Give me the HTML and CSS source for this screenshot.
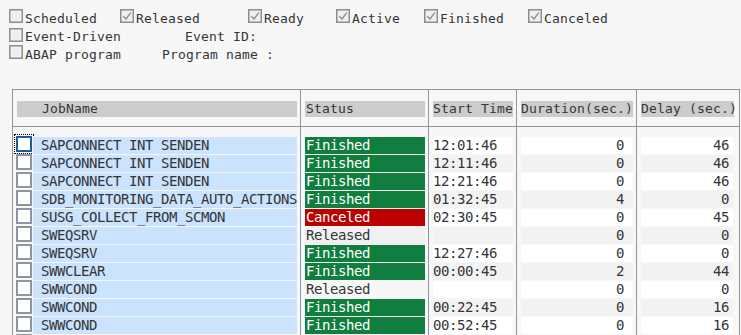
FILE: index.html
```html
<!DOCTYPE html>
<html>
<head>
<meta charset="utf-8">
<link rel="stylesheet" href="styles.css">
</head>
<body>
<div class="filters">
  <div class="frow r1">
    <label class="cb"><svg class="box" viewBox="0 0 14 14"><rect x="0.75" y="0.75" width="12.5" height="12.5"/></svg>Scheduled</label>
    <label class="cb"><svg class="box" viewBox="0 0 14 14"><rect x="0.75" y="0.75" width="12.5" height="12.5"/><path d="M3.3 7.2 L6 10 L10.8 3.6"/></svg>Released</label>
    <label class="cb"><svg class="box" viewBox="0 0 14 14"><rect x="0.75" y="0.75" width="12.5" height="12.5"/><path d="M3.3 7.2 L6 10 L10.8 3.6"/></svg>Ready</label>
    <label class="cb"><svg class="box" viewBox="0 0 14 14"><rect x="0.75" y="0.75" width="12.5" height="12.5"/><path d="M3.3 7.2 L6 10 L10.8 3.6"/></svg>Active</label>
    <label class="cb"><svg class="box" viewBox="0 0 14 14"><rect x="0.75" y="0.75" width="12.5" height="12.5"/><path d="M3.3 7.2 L6 10 L10.8 3.6"/></svg>Finished</label>
    <label class="cb"><svg class="box" viewBox="0 0 14 14"><rect x="0.75" y="0.75" width="12.5" height="12.5"/><path d="M3.3 7.2 L6 10 L10.8 3.6"/></svg>Canceled</label>
  </div>
  <div class="frow r2">
    <label class="cb"><svg class="box" viewBox="0 0 14 14"><rect x="0.75" y="0.75" width="12.5" height="12.5"/></svg>Event-Driven</label>
    <span>Event ID:</span>
  </div>
  <div class="frow r3">
    <label class="cb"><svg class="box" viewBox="0 0 14 14"><rect x="0.75" y="0.75" width="12.5" height="12.5"/></svg>ABAP program</label>
    <span>Program name :</span>
  </div>
</div>

<div class="table">
  <div class="row thead">
    <div class="c"><div class="hb h1">JobName</div></div>
    <div class="c"><div class="hb h2">Status</div></div>
    <div class="c"><div class="hb h3">Start Time</div></div>
    <div class="c"><div class="hb h4">Duration(sec.)</div></div>
    <div class="c"><div class="hb h5">Delay (sec.)</div></div>
  </div>
  <div class="row spacer">
    <div class="c"></div><div class="c"></div><div class="c"></div><div class="c"></div><div class="c"></div>
  </div>

  <div class="row">
    <div class="c c1"><span class="sel focus"></span><div class="job">SAPCONNECT INT SENDEN</div></div>
    <div class="c"><div class="st fin">Finished</div></div>
    <div class="c"><div class="tm">12:01:46</div></div>
    <div class="c"><div class="du">0</div></div>
    <div class="c"><div class="dl">46</div></div>
  </div>
  <div class="row alt">
    <div class="c c1"><span class="sel"></span><div class="job">SAPCONNECT INT SENDEN</div></div>
    <div class="c"><div class="st fin">Finished</div></div>
    <div class="c"><div class="tm">12:11:46</div></div>
    <div class="c"><div class="du">0</div></div>
    <div class="c"><div class="dl">46</div></div>
  </div>
  <div class="row">
    <div class="c c1"><span class="sel"></span><div class="job">SAPCONNECT INT SENDEN</div></div>
    <div class="c"><div class="st fin">Finished</div></div>
    <div class="c"><div class="tm">12:21:46</div></div>
    <div class="c"><div class="du">0</div></div>
    <div class="c"><div class="dl">46</div></div>
  </div>
  <div class="row alt">
    <div class="c c1"><span class="sel"></span><div class="job">SDB_MONITORING_DATA_AUTO_ACTIONS</div></div>
    <div class="c"><div class="st fin">Finished</div></div>
    <div class="c"><div class="tm">01:32:45</div></div>
    <div class="c"><div class="du">4</div></div>
    <div class="c"><div class="dl">0</div></div>
  </div>
  <div class="row">
    <div class="c c1"><span class="sel"></span><div class="job">SUSG_COLLECT_FROM_SCMON</div></div>
    <div class="c"><div class="st can">Canceled</div></div>
    <div class="c"><div class="tm">02:30:45</div></div>
    <div class="c"><div class="du">0</div></div>
    <div class="c"><div class="dl">45</div></div>
  </div>
  <div class="row alt">
    <div class="c c1"><span class="sel"></span><div class="job">SWEQSRV</div></div>
    <div class="c"><div class="st rel">Released</div></div>
    <div class="c"><div class="tm"></div></div>
    <div class="c"><div class="du">0</div></div>
    <div class="c"><div class="dl">0</div></div>
  </div>
  <div class="row">
    <div class="c c1"><span class="sel"></span><div class="job">SWEQSRV</div></div>
    <div class="c"><div class="st fin">Finished</div></div>
    <div class="c"><div class="tm">12:27:46</div></div>
    <div class="c"><div class="du">0</div></div>
    <div class="c"><div class="dl">0</div></div>
  </div>
  <div class="row alt">
    <div class="c c1"><span class="sel"></span><div class="job">SWWCLEAR</div></div>
    <div class="c"><div class="st fin">Finished</div></div>
    <div class="c"><div class="tm">00:00:45</div></div>
    <div class="c"><div class="du">2</div></div>
    <div class="c"><div class="dl">44</div></div>
  </div>
  <div class="row">
    <div class="c c1"><span class="sel"></span><div class="job">SWWCOND</div></div>
    <div class="c"><div class="st rel">Released</div></div>
    <div class="c"><div class="tm"></div></div>
    <div class="c"><div class="du">0</div></div>
    <div class="c"><div class="dl">0</div></div>
  </div>
  <div class="row alt">
    <div class="c c1"><span class="sel"></span><div class="job">SWWCOND</div></div>
    <div class="c"><div class="st fin">Finished</div></div>
    <div class="c"><div class="tm">00:22:45</div></div>
    <div class="c"><div class="du">0</div></div>
    <div class="c"><div class="dl">16</div></div>
  </div>
  <div class="row">
    <div class="c c1"><span class="sel"></span><div class="job">SWWCOND</div></div>
    <div class="c"><div class="st fin">Finished</div></div>
    <div class="c"><div class="tm">00:52:45</div></div>
    <div class="c"><div class="du">0</div></div>
    <div class="c"><div class="dl">16</div></div>
  </div>
  <div class="row alt">
    <div class="c c1"><span class="sel"></span><div class="job"></div></div>
    <div class="c"><div class="st fin"></div></div>
    <div class="c"><div class="tm"></div></div>
    <div class="c"><div class="du"></div></div>
    <div class="c"><div class="dl"></div></div>
  </div>
</div>
</body>
</html>
```

FILE: styles.css
```css
html, body {
  margin: 0;
  padding: 0;
}
body {
  background: #f7f7f7;
  font-family: "DejaVu Sans Mono", "Liberation Mono", monospace;
  color: #32363a;
  width: 741px;
  height: 335px;
  overflow: hidden;
}

/* selection screen */
.filters {
  padding: 9px 0 0 9px;
  font-size: 13px;
  letter-spacing: 0.17px;
}
.frow {
  display: grid;
  height: 18px;
  line-height: 19px;
  white-space: nowrap;
}
.r1 { grid-template-columns: 111px 128px 88px 88px 104px auto; }
.r2 { grid-template-columns: 176px auto; }
.r3 { grid-template-columns: 153px auto; }
.cb {
  display: flex;
  align-items: flex-start;
  gap: 2px;
}
.box {
  width: 14px;
  height: 14px;
  flex: none;
}
.r2 .box { margin-top: 1px; }
.box rect {
  fill: #efefef;
  stroke: #8e8e8e;
  stroke-width: 1.5;
}
.box path {
  fill: none;
  stroke: #8a8a8a;
  stroke-width: 1.3;
}

/* table */
.table {
  margin: 26px 0 0 12px;
  width: 727px;
  border-top: 1px solid #8d97a0;
  border-right: 1px solid #8d97a0;
  font-size: 14px;
  letter-spacing: -0.43px;
}
.row {
  display: grid;
  grid-template-columns: 288px 128px 88px 120px 103px;
  height: 18px;
}
.c {
  border-left: 1px solid #8d97a0;
  display: flex;
  align-items: flex-start;
  padding-left: 4px;
  white-space: nowrap;
  min-width: 0;
}
.thead {
  height: 36px;
  border-bottom: 1px solid #8d97a0;
}
.thead .c { padding-top: 11px; }
.spacer { height: 10px; }

.hb {
  height: 16px;
  line-height: 16px;
  background: #cccccc;
  font-size: 13px;
  letter-spacing: 0.17px;
}
.h1 { width: 255px; padding-left: 25px; }
.h2 { width: 119px; padding-left: 1px; }
.h3 { width: 80px; }
.h4 { width: 112px; }
.h5 { width: 93px; }

.c1 { padding-left: 3px; }
.sel {
  width: 12px;
  height: 12px;
  flex: none;
  margin-top: -1px;
  background: #ffffff;
  border: 2px solid #8d959e;
}
.sel.focus {
  border-color: #1f5c99;
  outline: 1px dotted #000;
  outline-offset: 1px;
}
.job {
  margin-left: 1px;
  width: 256px;
  padding-left: 8px;
  height: 17px;
  line-height: 17px;
  background: #cbe3fc;
  overflow: visible;
}
.st, .tm, .du, .dl {
  height: 17px;
  line-height: 17px;
}
.st {
  width: 119px;
  padding-left: 1px;
}
.fin { background: #107e3e; color: #ffffff; }
.can { background: #bb0000; color: #ffffff; }
.rel { background: transparent; }
.alt .rel { background: #f0f0f0; }

.tm { width: 80px; background: #ffffff; }
.du { width: 103px; padding-right: 9px; text-align: right; background: #ffffff; }
.dl { width: 88px; padding-right: 4px; text-align: right; background: #ffffff; }
.alt .tm, .alt .du, .alt .dl { background: #f2f2f2; }
```
